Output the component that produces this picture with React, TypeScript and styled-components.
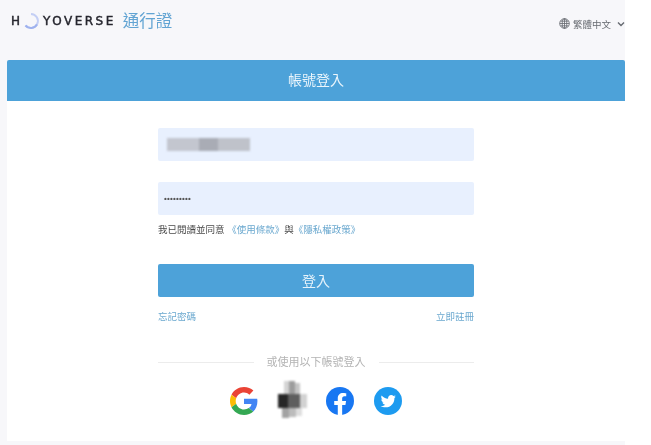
import React from 'react'
import styled, { createGlobalStyle } from 'styled-components'

const GlobalStyle = createGlobalStyle`
  html, body {
    margin: 0;
    padding: 0;
    background: #fff;
  }
  body {
    font-family: 'Liberation Sans', 'Noto Sans CJK TC', sans-serif;
    overflow: hidden;
  }
`

const Page = styled.div`
  width: 625px;
  height: 445px;
  display: flex;
  flex-direction: column;
  background: #f7f7fa;
  filter: blur(0.45px);
`

const Header = styled.header`
  height: 59px;
  display: flex;
  justify-content: space-between;
  align-items: flex-start;
  padding: 10px 0 0 11px;
  box-sizing: border-box;
`

const Brand = styled.div`
  display: flex;
  align-items: center;
  height: 21px;
`

const LogoWord = styled.span<{ $spacing: number }>`
  font-family: 'DejaVu Sans', sans-serif;
  font-size: 12px;
  line-height: 1;
  letter-spacing: ${({ $spacing }) => $spacing}px;
  color: #26262e;
  -webkit-text-stroke: 0.45px #26262e;
`

const LogoRing = styled.svg`
  width: 20px;
  height: 20px;
  margin: 0 2px 0 1px;
`

const BrandName = styled.span`
  margin-left: 7px;
  font-size: 16.5px;
  line-height: 22px;
  padding-top: 1px;
  color: #62a4d3;
`

const LangPicker = styled.div`
  display: flex;
  align-items: center;
  height: 27px;
  font-size: 9.5px;
  color: #666a70;
`

const LangText = styled.span`
  margin: 0 6px 0 3px;
`

const TitleBar = styled.div`
  height: 41px;
  margin: 1px 0 0 7px;
  padding-bottom: 3px;
  box-sizing: border-box;
  display: flex;
  align-items: center;
  justify-content: center;
  background: #4da2d9;
  border-radius: 2px 2px 0 0;
  color: #eaf5fc;
  font-size: 14px;
`

const Card = styled.main`
  flex: none;
  height: 340px;
  margin-left: 7px;
  padding-top: 27px;
  box-sizing: border-box;
  background: #fff;
`

const Form = styled.div`
  width: 316px;
  margin: 0 auto;
  display: flex;
  flex-direction: column;
`

const Field = styled.div<{ $gap?: number }>`
  height: 33px;
  margin-bottom: ${({ $gap }) => $gap ?? 0}px;
  display: flex;
  align-items: center;
  background: #e8f0fe;
  border-radius: 2px;
`

const RedactedText = styled.div`
  width: 83px;
  height: 13px;
  margin-left: 9px;
  background: linear-gradient(90deg, #c3c6cf 0 38%, #a9acb5 38% 62%, #bfc2ca 62% 100%);
  filter: blur(1px);
`

const PasswordDots = styled.span`
  margin-left: 6px;
  font-size: 8px;
  letter-spacing: 0.2px;
  color: #555;
  font-weight: 700;
`

const Agreement = styled.p`
  margin: 8px 0 0;
  height: 13px;
  font-size: 9.5px;
  line-height: 13px;
  color: #4a4a4a;
  white-space: nowrap;
`

const TextLink = styled.a`
  color: #6aa8cf;
  text-decoration: none;
`

const SubmitButton = styled.button`
  height: 33px;
  margin-top: 28px;
  padding: 0 0 2px;
  border: none;
  border-radius: 2px;
  background: #4da2d9;
  color: #e6f3fb;
  font-family: inherit;
  font-size: 14px;
`

const LinkRow = styled.div`
  display: flex;
  justify-content: space-between;
  margin-top: 13px;
  font-size: 9.5px;
  line-height: 14px;
`

const Divider = styled.div`
  display: flex;
  align-items: center;
  gap: 13px;
  margin-top: 31px;
  font-size: 11px;
  line-height: 14px;
  color: #b4b4b4;

  &::before,
  &::after {
    content: '';
    flex: 1;
    height: 1px;
    background: #ececec;
  }
`

const SocialRow = styled.div`
  display: flex;
  justify-content: center;
  align-items: center;
  margin-top: 18px;
  gap: 20px;
`

const SocialIcon = styled.svg`
  width: 28px;
  height: 28px;
  flex: none;
`

const RedactedIcon = styled.svg`
  width: 32px;
  height: 40px;
  margin: -6px -2px;
  flex: none;
  filter: blur(1.2px);
`

const GlobeIcon = () => (
  <svg width="11" height="11" viewBox="0 0 24 24" fill="none" stroke="#666a70" strokeWidth="1.8">
    <circle cx="12" cy="12" r="10.5" />
    <ellipse cx="12" cy="12" rx="5" ry="10.5" />
    <path d="M1.5 12h21M3 7h18M3 17h18M12 1.5v21" />
  </svg>
)

const ChevronIcon = () => (
  <svg width="8" height="6" viewBox="0 0 8 6" fill="none" stroke="#666a70" strokeWidth="1.4">
    <path d="M1 1.5 4 4.5 7 1.5" />
  </svg>
)

const App = () => (
  <>
    <GlobalStyle />
    <Page>
      <Header>
        <Brand>
          <LogoWord $spacing={0}>H</LogoWord>
          <LogoRing viewBox="0 0 20 20" fill="none">
            <path d="M4.500 14.500A7 7 0 1 0 10 3" stroke="#c4cff5" strokeWidth="2" />
            <path d="M4.500 14.500A7 7 0 0 0 16 13.600" stroke="#9fb2ee" strokeWidth="2" />
          </LogoRing>
          <LogoWord $spacing={2.5}>YOVERSE</LogoWord>
          <BrandName>通行證</BrandName>
        </Brand>
        <LangPicker>
          <GlobeIcon />
          <LangText>繁體中文</LangText>
          <ChevronIcon />
        </LangPicker>
      </Header>

      <TitleBar>帳號登入</TitleBar>

      <Card>
        <Form>
          <Field $gap={21}>
            <RedactedText />
          </Field>
          <Field>
            <PasswordDots>•••••••••</PasswordDots>
          </Field>
          <Agreement>
            我已閱讀並同意 <TextLink href="#">《使用條款》</TextLink>與<TextLink href="#">《隱私權政策》</TextLink>
          </Agreement>
          <SubmitButton>登入</SubmitButton>
          <LinkRow>
            <TextLink href="#">忘記密碼</TextLink>
            <TextLink href="#">立即註冊</TextLink>
          </LinkRow>
          <Divider>或使用以下帳號登入</Divider>
          <SocialRow>
            <SocialIcon viewBox="0 0 48 48">
              <path fill="#EA4335" d="M24 9.500c3.500 0 6.700 1.200 9.200 3.600l6.900-6.900C35.900 2.400 30.500 0 24 0 14.600 0 6.500 5.400 2.600 13.200l8 6.200C12.500 13.700 17.800 9.500 24 9.500z" />
              <path fill="#4285F4" d="M47 24.500c0-1.600-.1-3.100-.4-4.500H24v9h12.900c-.6 3-2.200 5.500-4.700 7.200l7.700 6C44.400 38 47 31.800 47 24.500z" />
              <path fill="#FBBC05" d="M10.600 28.600c-.5-1.400-.8-3-.8-4.600s.3-3.200.8-4.600l-8-6.200C.9 16.500 0 20.100 0 24s.9 7.500 2.600 10.800l8-6.200z" />
              <path fill="#34A853" d="M24 48c6.500 0 11.900-2.100 15.900-5.800l-7.700-6c-2.200 1.500-5 2.300-8.200 2.300-6.200 0-11.500-4.200-13.400-9.900l-8 6.200C6.500 42.600 14.600 48 24 48z" />
            </SocialIcon>
            <RedactedIcon viewBox="0 0 32 40">
              <rect x="8" y="0" width="5" height="13" fill="#d4d4d4" />
              <rect x="13" y="0" width="6" height="13" fill="#9c9c9c" />
              <rect x="19" y="2" width="5" height="11" fill="#c4c4c4" />
              <rect x="2" y="13" width="10" height="14" fill="#262626" />
              <rect x="12" y="13" width="12" height="14" fill="#5e5e5e" />
              <rect x="24" y="13" width="7" height="14" fill="#d2d2d2" />
              <rect x="6" y="27" width="7" height="10" fill="#a2a2a2" />
              <rect x="13" y="27" width="7" height="9" fill="#bcbcbc" />
              <rect x="20" y="27" width="6" height="8" fill="#dedede" />
            </RedactedIcon>
            <SocialIcon viewBox="0 0 48 48">
              <circle cx="24" cy="24" r="24" fill="#1877F2" />
              <path fill="#fff" d="M33.300 31l1.100-7H27.700v-4.500c0-1.900.9-3.800 4-3.800h3V10.700s-2.800-.5-5.400-.5c-5.500 0-9.100 3.300-9.100 9.400V24h-6.100v7h6.100v17h7.500V31h5.600z" />
            </SocialIcon>
            <SocialIcon viewBox="0 0 48 48">
              <circle cx="24" cy="24" r="24" fill="#1d9bf0" />
              <path fill="#fff" d="M37.500 16.300c-1 .4-2 .7-3.100.8 1.100-.7 2-1.700 2.400-3-1 .6-2.200 1.100-3.400 1.300-1-1.100-2.400-1.700-3.900-1.700-3 0-5.400 2.400-5.400 5.400 0 .4 0 .8.100 1.200-4.500-.2-8.500-2.400-11.100-5.700-.5.800-.7 1.700-.7 2.700 0 1.900 1 3.500 2.400 4.500-.9 0-1.700-.3-2.400-.7v.1c0 2.600 1.900 4.800 4.300 5.300-.5.100-.9.200-1.400.2-.3 0-.7 0-1-.1.700 2.100 2.700 3.700 5 3.700-1.800 1.500-4.200 2.300-6.700 2.300-.4 0-.9 0-1.300-.1 2.400 1.500 5.200 2.400 8.300 2.400 9.900 0 15.400-8.200 15.400-15.400v-.7c1-.8 1.900-1.700 2.700-2.800z" />
            </SocialIcon>
          </SocialRow>
        </Form>
      </Card>
    </Page>
  </>
)

export default App
